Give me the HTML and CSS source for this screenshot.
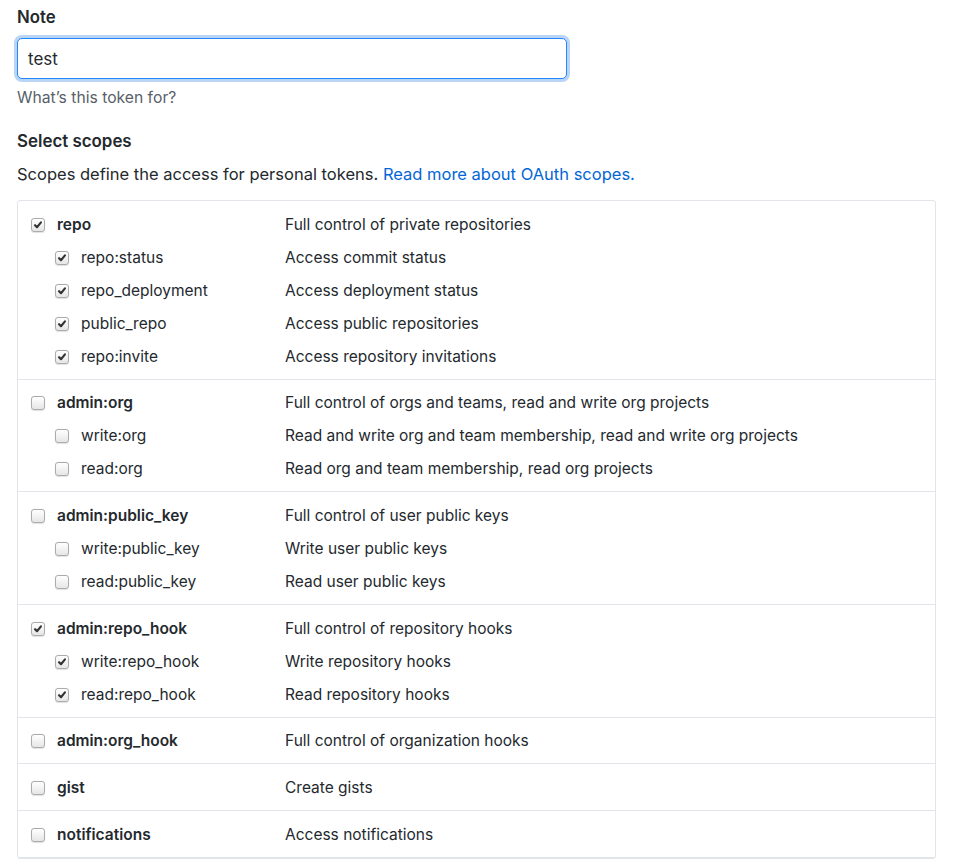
FILE: index.html
```html
<!DOCTYPE html>
<html lang="en">
<head>
  <meta charset="UTF-8">
  <title>New personal access token</title>
  <link rel="stylesheet" href="styles.css">
</head>
<body>
  <div class="page">
    <label class="field-label" for="note">Note</label>
    <input id="note" class="note-input" type="text" value="test">
    <p class="hint">What’s this token for?</p>

    <h3 class="section-title">Select scopes</h3>
    <p class="section-desc">Scopes define the access for personal tokens. <a href="#">Read more about OAuth scopes.</a></p>

    <div class="scopes">
      <div class="scope-group">
        <div class="scope-row">
          <div class="scope-name top"><span class="cb checked"><svg viewBox="0 0 13 13"><path d="M3.3 6.7 5.4 8.9 9.7 3.7"/></svg></span>repo</div>
          <div class="scope-desc">Full control of private repositories</div>
        </div>
        <div class="scope-row">
          <div class="scope-name sub"><span class="cb checked"><svg viewBox="0 0 13 13"><path d="M3.3 6.7 5.4 8.9 9.7 3.7"/></svg></span>repo:status</div>
          <div class="scope-desc">Access commit status</div>
        </div>
        <div class="scope-row">
          <div class="scope-name sub"><span class="cb checked"><svg viewBox="0 0 13 13"><path d="M3.3 6.7 5.4 8.9 9.7 3.7"/></svg></span>repo_deployment</div>
          <div class="scope-desc">Access deployment status</div>
        </div>
        <div class="scope-row">
          <div class="scope-name sub"><span class="cb checked"><svg viewBox="0 0 13 13"><path d="M3.3 6.7 5.4 8.9 9.7 3.7"/></svg></span>public_repo</div>
          <div class="scope-desc">Access public repositories</div>
        </div>
        <div class="scope-row">
          <div class="scope-name sub"><span class="cb checked"><svg viewBox="0 0 13 13"><path d="M3.3 6.7 5.4 8.9 9.7 3.7"/></svg></span>repo:invite</div>
          <div class="scope-desc">Access repository invitations</div>
        </div>
      </div>

      <div class="scope-group">
        <div class="scope-row">
          <div class="scope-name top"><span class="cb"></span>admin:org</div>
          <div class="scope-desc">Full control of orgs and teams, read and write org projects</div>
        </div>
        <div class="scope-row">
          <div class="scope-name sub"><span class="cb"></span>write:org</div>
          <div class="scope-desc">Read and write org and team membership, read and write org projects</div>
        </div>
        <div class="scope-row">
          <div class="scope-name sub"><span class="cb"></span>read:org</div>
          <div class="scope-desc">Read org and team membership, read org projects</div>
        </div>
      </div>

      <div class="scope-group">
        <div class="scope-row">
          <div class="scope-name top"><span class="cb"></span>admin:public_key</div>
          <div class="scope-desc">Full control of user public keys</div>
        </div>
        <div class="scope-row">
          <div class="scope-name sub"><span class="cb"></span>write:public_key</div>
          <div class="scope-desc">Write user public keys</div>
        </div>
        <div class="scope-row">
          <div class="scope-name sub"><span class="cb"></span>read:public_key</div>
          <div class="scope-desc">Read user public keys</div>
        </div>
      </div>

      <div class="scope-group">
        <div class="scope-row">
          <div class="scope-name top"><span class="cb checked"><svg viewBox="0 0 13 13"><path d="M3.3 6.7 5.4 8.9 9.7 3.7"/></svg></span>admin:repo_hook</div>
          <div class="scope-desc">Full control of repository hooks</div>
        </div>
        <div class="scope-row">
          <div class="scope-name sub"><span class="cb checked"><svg viewBox="0 0 13 13"><path d="M3.3 6.7 5.4 8.9 9.7 3.7"/></svg></span>write:repo_hook</div>
          <div class="scope-desc">Write repository hooks</div>
        </div>
        <div class="scope-row">
          <div class="scope-name sub"><span class="cb checked"><svg viewBox="0 0 13 13"><path d="M3.3 6.7 5.4 8.9 9.7 3.7"/></svg></span>read:repo_hook</div>
          <div class="scope-desc">Read repository hooks</div>
        </div>
      </div>

      <div class="scope-group">
        <div class="scope-row">
          <div class="scope-name top"><span class="cb"></span>admin:org_hook</div>
          <div class="scope-desc">Full control of organization hooks</div>
        </div>
      </div>

      <div class="scope-group">
        <div class="scope-row">
          <div class="scope-name top"><span class="cb"></span>gist</div>
          <div class="scope-desc">Create gists</div>
        </div>
      </div>

      <div class="scope-group">
        <div class="scope-row">
          <div class="scope-name top"><span class="cb"></span>notifications</div>
          <div class="scope-desc">Access notifications</div>
        </div>
      </div>
    </div>
  </div>
</body>
</html>
```

FILE: styles.css
```css
body {
  margin: 0;
  font-family: Inter, "Liberation Sans", Arial, sans-serif;
  font-size: 16px;
  line-height: 24px;
  color: #24292e;
  background: #fff;
}
.page {
  width: 919px;
  padding: 5px 0 0 17px;
}
.field-label {
  display: block;
  font-size: 16.8px;
  font-weight: 600;
}
.note-input {
  display: block;
  box-sizing: border-box;
  width: 550px;
  height: 41px;
  margin: 9px 0 0;
  padding: 0 10px;
  font: inherit;
  font-size: 17px;
  color: #24292e;
  border: 1px solid #2188ff;
  border-radius: 5px;
  box-shadow: 0 0 0 3px rgba(3, 102, 214, 0.28);
  outline: none;
}
.hint {
  margin: 7px 0 0;
  font-size: 15.7px;
  color: #586069;
}
.section-title {
  margin: 19px 0 0;
  font-size: 16.9px;
  font-weight: 600;
}
.section-desc {
  margin: 9px 0 0;
  font-size: 16.5px;
}
.section-desc a {
  color: #0366d6;
  text-decoration: none;
}
.scopes {
  margin-top: 14px;
  border: 1px solid #e1e4e8;
  border-radius: 3px;
  font-size: 15.5px;
}
.scope-group {
  padding: 7px 0 5.7px;
  border-bottom: 1px solid #e1e4e8;
}
.scope-row {
  display: flex;
  align-items: center;
  height: 33px;
}
.scope-name {
  display: flex;
  align-items: center;
  box-sizing: border-box;
  width: 267px;
  flex-shrink: 0;
}
.scope-name.top {
  padding-left: 13px;
  font-weight: 600;
}
.scope-name.sub {
  padding-left: 37px;
}
.scope-desc {
  flex: 1;
}
.cb {
  box-sizing: border-box;
  width: 14px;
  height: 14px;
  margin-right: 12px;
  border: 1px solid #ababab;
  border-radius: 3px;
  background: linear-gradient(#ffffff, #e6e6e6);
  box-shadow: 0 0.5px 1px rgba(0, 0, 0, 0.12);
  display: inline-flex;
  align-items: center;
  justify-content: center;
}
.cb svg {
  width: 12px;
  height: 12px;
  fill: none;
  stroke: #333;
  stroke-width: 2.3;
  stroke-linecap: round;
  stroke-linejoin: round;
}
```
